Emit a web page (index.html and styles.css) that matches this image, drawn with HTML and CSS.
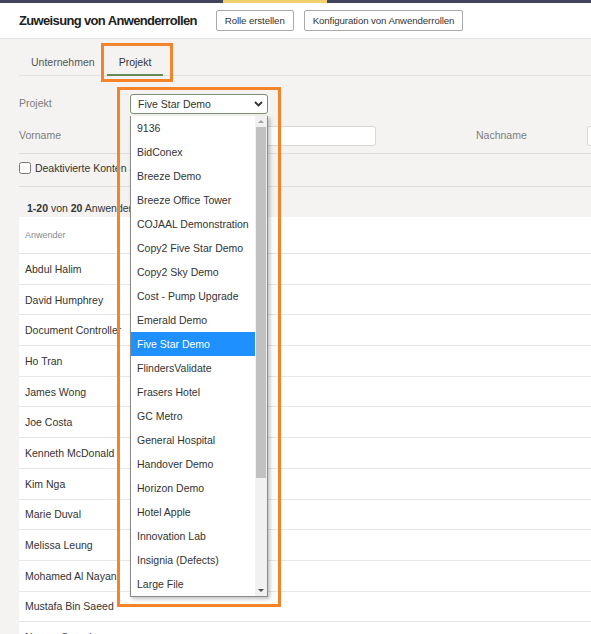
FILE: index.html
```html
<!DOCTYPE html>
<html lang="de">
<head>
  <meta charset="UTF-8" />
  <meta name="viewport" content="width=device-width, initial-scale=1" />
  <title>Zuweisung von Anwenderrollen</title>
  <link rel="stylesheet" href="styles.css">
</head>
<body>
  <div class="topbar">
    <div class="topbar-dark"></div>
    <div class="topbar-accent"></div>
    <div class="topbar-dark grow"></div>
  </div>

  <header class="page-header">
    <h1>Zuweisung von Anwenderrollen</h1>
    <button type="button" class="btn">Rolle erstellen</button>
    <button type="button" class="btn">Konfiguration von Anwenderrollen</button>
  </header>

  <main class="content">
    <nav class="tabs">
      <span class="tab">Unternehmen</span>
      <span class="tab active">Projekt</span>
    </nav>

    <div class="filters">
      <div class="field-row">
        <label class="field-label">Projekt</label>
        <div class="select">
          <span>Five Star Demo</span>
          <svg width="9" height="6" viewBox="0 0 9 6"><path d="M1 1l3.5 3.5L8 1" fill="none" stroke="#333" stroke-width="1.8"/></svg>
        </div>
      </div>
      <div class="field-row">
        <label class="field-label">Vorname</label>
        <input class="text-input" type="text">
        <label class="field-label second">Nachname</label>
        <input class="text-input" type="text">
      </div>
    </div>

    <div class="check-row">
      <label><input type="checkbox"> Deaktivierte Konten anzeigen</label>
    </div>

    <div class="count"><b>1-20</b> von <b>20</b> Anwender</div>

    <table class="users">
      <thead>
        <tr><th>Anwender</th></tr>
      </thead>
      <tbody>
        <tr><td>Abdul Halim</td></tr>
        <tr><td>David Humphrey</td></tr>
        <tr><td>Document Controller</td></tr>
        <tr><td>Ho Tran</td></tr>
        <tr><td>James Wong</td></tr>
        <tr><td>Joe Costa</td></tr>
        <tr><td>Kenneth McDonald</td></tr>
        <tr><td>Kim Nga</td></tr>
        <tr><td>Marie Duval</td></tr>
        <tr><td>Melissa Leung</td></tr>
        <tr><td>Mohamed Al Nayan</td></tr>
        <tr><td>Mustafa Bin Saeed</td></tr>
        <tr><td>Nasser Saeed</td></tr>
      </tbody>
    </table>
  </main>

  <!-- open select list -->
  <div class="dropdown">
    <ul class="options">
      <li>9136</li>
      <li>BidConex</li>
      <li>Breeze Demo</li>
      <li>Breeze Office Tower</li>
      <li>COJAAL Demonstration</li>
      <li>Copy2 Five Star Demo</li>
      <li>Copy2 Sky Demo</li>
      <li>Cost - Pump Upgrade</li>
      <li>Emerald Demo</li>
      <li class="selected">Five Star Demo</li>
      <li>FlindersValidate</li>
      <li>Frasers Hotel</li>
      <li>GC Metro</li>
      <li>General Hospital</li>
      <li>Handover Demo</li>
      <li>Horizon Demo</li>
      <li>Hotel Apple</li>
      <li>Innovation Lab</li>
      <li>Insignia (Defects)</li>
      <li>Large File</li>
    </ul>
    <div class="scrollbar">
      <span class="arrow up"></span>
      <div class="thumb"></div>
      <span class="arrow down"></span>
    </div>
  </div>

  <!-- highlight boxes -->
  <div class="mark mark-tab"></div>
  <div class="mark mark-list"></div>
</body>
</html>
```

FILE: styles.css
```css
body {
  margin: 0;
  font-family: "Liberation Sans", Arial, sans-serif;
  font-size: 10.5px;
  color: #333;
  background: #f4f3f1;
  width: 591px;
  height: 634px;
  overflow: hidden;
  position: relative;
}

.topbar {
  display: flex;
  height: 3px;
}

.topbar-dark {
  width: 223px;
  background: #42445c;
}

.topbar-accent {
  width: 104px;
  background: #f2cf6e;
}

.grow {
  flex: 1;
}

.page-header {
  display: flex;
  align-items: center;
  height: 35px;
  padding-left: 19px;
  background: #fff;
  border-bottom: 1px solid #e3e3e3;
}

.page-header h1 {
  margin: 0 19px 0 0;
  font-size: 13px;
  letter-spacing: -0.65px;
  font-weight: bold;
  color: #222;
}

.btn {
  height: 21px;
  margin-right: 10px;
  padding: 0 8px;
  font-family: inherit;
  font-size: 9.7px;
  letter-spacing: -0.1px;
  color: #333;
  background: #fff;
  border: 1px solid #a9a9a9;
  border-radius: 2px;
}

.content {
  width: 900px;
  padding-left: 19px;
}

.tabs {
  display: flex;
  margin-top: 13px;
  border-bottom: 1px solid #e2e2e2;
}

.tab {
  height: 22px;
  line-height: 21px;
  padding: 0 12px;
  color: #555;
  border-bottom: 2px solid transparent;
  margin-bottom: -1px;
}

.tab.active {
  color: #333;
  border-bottom-color: #6a8a55;
}

.filters {
  border-bottom: 1px solid #dedede;
  padding: 18px 0 7px;
}

.field-row {
  display: flex;
  align-items: center;
  height: 20px;
  margin-bottom: 12px;
}

.field-row:last-child {
  margin-bottom: 0;
}

.field-label {
  flex-shrink: 0;
  width: 111px;
  margin-top: -3px;
  color: #7d7d7d;
}

.field-label.second {
  margin-left: 100px;
}

.select {
  display: flex;
  align-items: center;
  justify-content: space-between;
  box-sizing: border-box;
  width: 138px;
  height: 20px;
  padding: 0 4px 0 7px;
  background: #fff;
  border: 1px solid #7d9170;
  border-radius: 3px;
}

.text-input {
  flex-shrink: 0;
  box-sizing: border-box;
  width: 246px;
  height: 20px;
  margin: 0;
  border: 1px solid #d8d8d8;
  border-radius: 3px;
  background: #fff;
}

.check-row {
  height: 33px;
  box-sizing: border-box;
  padding-bottom: 4px;
  display: flex;
  align-items: center;
  border-bottom: 1px solid #dedede;
}

.check-row input {
  width: 12px;
  height: 12px;
  margin: 0 1px 0 0;
  vertical-align: -2px;
}

.count {
  height: 30px;
  line-height: 42px;
  padding-left: 8px;
}

.users {
  width: 100%;
  border-collapse: collapse;
  background: #fff;
}

.users th {
  height: 34px;
  padding-left: 6px;
  text-align: left;
  font-weight: normal;
  font-size: 9px;
  color: #8a8a8a;
  border-bottom: 1px solid #e3e3e3;
}

.users td {
  height: 29.7px;
  padding: 0 0 0 6px;
  border-bottom: 1px solid #e6e6e6;
}

.dropdown {
  position: absolute;
  left: 130px;
  top: 116px;
  width: 138px;
  height: 481px;
  box-sizing: border-box;
  display: flex;
  background: #fff;
  border: 1px solid #8a8a8a;
  border-top: none;
  box-shadow: 2px 2px 4px rgba(0, 0, 0, 0.25);
}

.options {
  flex: 1;
  margin: 0;
  padding: 0;
  list-style: none;
}

.options li {
  height: 24px;
  line-height: 24px;
  padding-left: 6px;
  white-space: nowrap;
  overflow: hidden;
}

.options li.selected {
  background: #1e90ff;
  color: #fff;
}

.scrollbar {
  width: 12px;
  background: #f1f1f1;
  display: flex;
  flex-direction: column;
  align-items: center;
}

.thumb {
  width: 10px;
  height: 351px;
  background: #c1c1c1;
}

.arrow {
  display: block;
  width: 0;
  height: 0;
  margin: 4px 0;
  border-left: 3px solid transparent;
  border-right: 3px solid transparent;
}

.arrow.up {
  border-bottom: 3px solid #a3a3a3;
}

.arrow.down {
  margin-top: auto;
  border-top: 3px solid #505050;
}

.mark {
  position: absolute;
  border: 3px solid #f5832a;
  box-sizing: border-box;
}

.mark-tab {
  left: 101px;
  top: 43px;
  width: 72px;
  height: 39px;
}

.mark-list {
  left: 117px;
  top: 87px;
  width: 164px;
  height: 520px;
}
```
